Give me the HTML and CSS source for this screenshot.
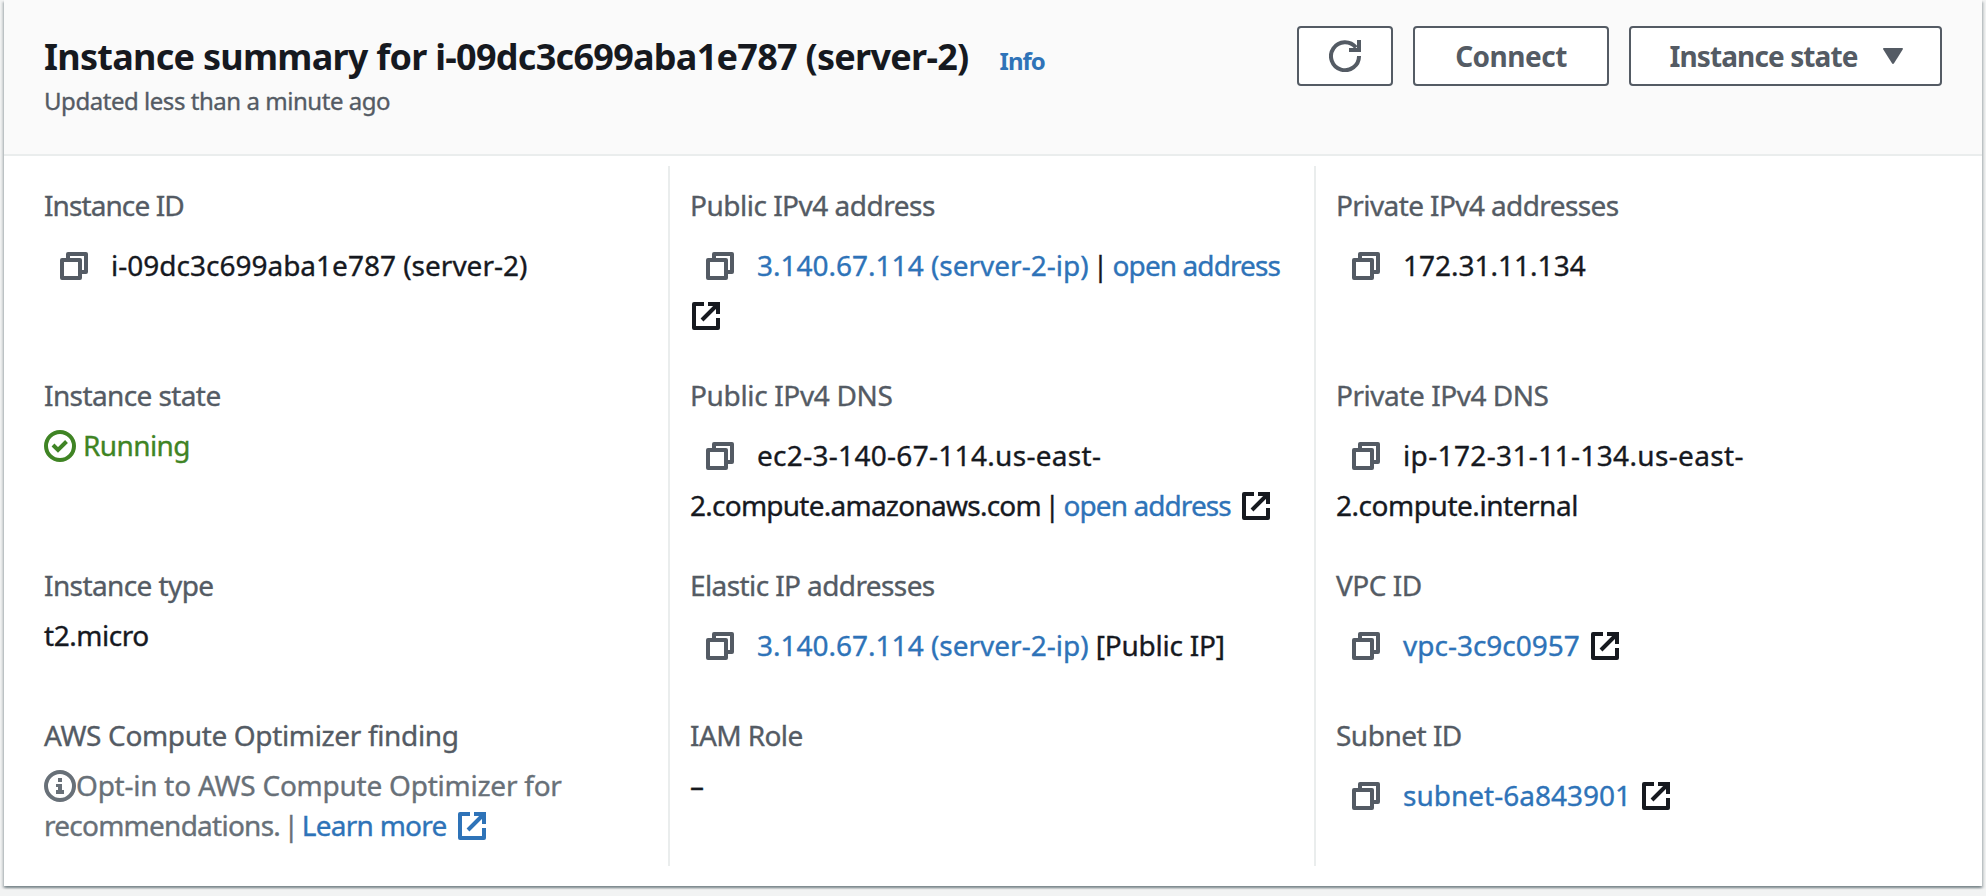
FILE: index.html
```html
<!DOCTYPE html>
<html lang="en">
<head>
<meta charset="utf-8">
<title>Instance summary</title>
<link rel="stylesheet" href="styles.css">
</head>
<body>
<svg class="sprite" aria-hidden="true">
  <symbol id="copy" viewBox="0 0 28 28"><g fill="none" stroke="currentColor" stroke-width="4" stroke-linejoin="round"><path d="M2 8h18v18H2z"/><path d="M8 8V2h18v18h-6"/></g></symbol>
  <symbol id="external" viewBox="0 0 28 28"><g fill="none" stroke="currentColor" stroke-width="4"><path stroke-linejoin="round" d="M12 2H2v24h24V16"/><path d="M16 2h10v10M26 2 10 18"/></g></symbol>
  <symbol id="check" viewBox="0 0 32 32"><g fill="none" stroke="currentColor" stroke-width="4"><circle cx="16" cy="16" r="14"/><path d="m9 15 5 5 8.500-8.500"/></g></symbol>
  <symbol id="info" viewBox="0 0 32 32"><circle cx="16" cy="16" r="14" fill="none" stroke="currentColor" stroke-width="4"/><path fill="currentColor" d="M14 8h4v4h-4zM12 14h6v6h2v4h-8v-4h2v-3h-2z"/></symbol>
  <symbol id="refresh" viewBox="0 0 32 32"><path fill="none" stroke="currentColor" stroke-width="4" d="M30 16A14 14 0 1 1 27 7.500"/><path fill="currentColor" d="M28 0h4v12H20V8h8z"/></symbol>
</svg>

<main class="card">
  <header class="card-header">
    <div class="heading">
      <div class="title-row"><h1 class="title">Instance summary for i-09dc3c699aba1e787 (server-2)</h1><a class="info">Info</a></div>
      <p class="updated">Updated less than a minute ago</p>
    </div>
    <div class="actions">
      <button class="btn btn-icon" aria-label="Refresh"><svg class="icon-lg"><use href="#refresh"/></svg></button>
      <button class="btn btn-connect">Connect</button>
      <button class="btn btn-state">Instance state<svg class="caret" viewBox="0 0 20 16"><path d="M1 0h18q1.500 0 .7 1.500L11.200 15q-1.200 1.800-2.400 0L.3 1.500Q-.5 0 1 0z"/></svg></button>
    </div>
  </header>

  <div class="columns">
    <section class="col">
      <div class="field"><div class="label ls-9">Instance ID</div>
        <div class="value copyable"><svg class="copy"><use href="#copy"/></svg>i-09dc3c699aba1e787 (server-2)</div></div>
      <div class="field"><div class="label ls-6">Instance state</div>
        <div class="value running"><svg class="icon-lg"><use href="#check"/></svg>Running</div></div>
      <div class="field"><div class="label ls-6">Instance type</div>
        <div class="value ls-4">t2.micro</div></div>
      <div class="field"><div class="label ls-3">AWS Compute Optimizer finding</div>
        <div class="value muted"><svg class="icon-lg"><use href="#info"/></svg><span class="ls-2">Opt-in to AWS Compute Optimizer for</span><br><span class="ls-7">recommendations. <span class="sep">|</span> <a class="link">Learn more</a></span><svg class="ext link"><use href="#external"/></svg></div></div>
    </section>

    <section class="col">
      <div class="field"><div class="label">Public IPv4 address</div>
        <div class="value copyable"><svg class="copy"><use href="#copy"/></svg><a class="link">3.140.67.114 (server-2-ip)</a> <span class="sep">|</span> <a class="link ls-9">open address</a><br><svg class="ext ext-start"><use href="#external"/></svg></div></div>
      <div class="field"><div class="label ls-3">Public IPv4 DNS</div>
        <div class="value copyable"><svg class="copy"><use href="#copy"/></svg><span class="wide">ec2-3-140-67-114.us-east-</span><br><span class="ls-7">2.compute.amazonaws.com <span class="sep">|</span></span> <a class="link ls-9">open address</a><svg class="ext"><use href="#external"/></svg></div></div>
      <div class="field"><div class="label ls-6">Elastic IP addresses</div>
        <div class="value copyable"><svg class="copy"><use href="#copy"/></svg><a class="link">3.140.67.114 (server-2-ip)</a> <span class="ls-2">[Public IP]</span></div></div>
      <div class="field"><div class="label ls-6">IAM Role</div>
        <div class="value">–</div></div>
    </section>

    <section class="col">
      <div class="field"><div class="label ls-6">Private IPv4 addresses</div>
        <div class="value copyable"><svg class="copy"><use href="#copy"/></svg>172.31.11.134</div></div>
      <div class="field"><div class="label ls-4">Private IPv4 DNS</div>
        <div class="value copyable"><svg class="copy"><use href="#copy"/></svg><span class="wider">ip-172-31-11-134.us-east-</span><br><span class="ls-4">2.compute.internal</span></div></div>
      <div class="field"><div class="label">VPC ID</div>
        <div class="value copyable"><svg class="copy"><use href="#copy"/></svg><a class="link">vpc-3c9c0957</a><svg class="ext"><use href="#external"/></svg></div></div>
      <div class="field"><div class="label">Subnet ID</div>
        <div class="value copyable"><svg class="copy"><use href="#copy"/></svg><a class="link">subnet-6a843901</a><svg class="ext"><use href="#external"/></svg></div></div>
    </section>
  </div>
</main>
</body>
</html>
```
FILE: styles.css
```css
* { box-sizing: border-box; }

body {
  margin: 0;
  height: 896px;
  overflow: hidden;
  background: #f2f3f3;
  color: #16191f;
  font: 28px/40px "Noto Sans", sans-serif;
}

.sprite { display: none; }

.card {
  height: 886px;
  margin: 0 4px;
  background: #fff;
  box-shadow: 0 2px 2px rgba(0, 28, 36, .3), 2px 2px 2px rgba(0, 28, 36, .15), -2px 2px 2px rgba(0, 28, 36, .15);
}

.card-header {
  display: flex;
  justify-content: space-between;
  align-items: flex-start;
  height: 156px;
  padding: 26px 40px 0;
  background: #fafafa;
  border-bottom: 2px solid #eaeded;
}

.heading { padding-top: 7px; }
.title-row { display: flex; align-items: baseline; gap: 31px; }
.title { margin: 0; font-size: 36px; line-height: 48px; font-weight: 700; letter-spacing: -.73px; }
.info { font-size: 24px; line-height: 32px; font-weight: 700; letter-spacing: -1px; color: #2e73b8; }
.updated { margin: 4px 0 0; font-size: 24px; line-height: 32px; letter-spacing: -.46px; color: #545b64; }

.actions { display: flex; gap: 20px; }
.btn {
  display: flex;
  align-items: center;
  justify-content: center;
  height: 60px;
  padding: 0;
  border: 2px solid #545b64;
  border-radius: 4px;
  background: #fff;
  color: #545b64;
  font: 700 28px/40px "Noto Sans", sans-serif;
}
.btn-icon { width: 96px; }
.btn-connect { width: 196px; letter-spacing: -.5px; }
.btn-state { width: 313px; padding-left: 2px; letter-spacing: -.9px; gap: 26px; }
.caret { width: 20px; height: 16px; fill: currentColor; }

.columns {
  display: grid;
  grid-template-columns: 664px 646px 1fr;
  height: 700px;
  margin-top: 10px;
}
.col {
  display: grid;
  grid-template-rows: 190px 190px 150px 1fr;
  padding: 19px 0 0 20px;
  border-left: 2px solid #eaeded;
}
.col:first-child { padding-left: 40px; border-left: 0; }

/* Slight stroke gives regular text a sturdier weight */
.label, .value, .updated { -webkit-text-stroke: .35px currentColor; }

.label { color: #545b64; letter-spacing: -.5px; }
.value { margin-top: 10px; white-space: nowrap; }
.copyable { margin-top: 15px; line-height: 50px; }
.running { color: #3f8424; letter-spacing: -.6px; }
.running .icon-lg { margin-right: 7px; }
.muted { color: #687078; }
.link { color: #2e73b8; }
.sep { margin: 0 -3px; }

.ls-2 { letter-spacing: -.24px; }
.ls-3 { letter-spacing: -.35px; }
.ls-4 { letter-spacing: -.46px; }
.ls-6 { letter-spacing: -.6px; }
.ls-7 { letter-spacing: -.75px; }
.ls-9 { letter-spacing: -.91px; }
.wide { letter-spacing: .3px; }
.wider { letter-spacing: .36px; }

.icon-lg { width: 32px; height: 32px; vertical-align: -6px; }
.copy { width: 28px; height: 28px; margin: 0 23px 0 16px; vertical-align: -4px; color: #545b64; }
.ext { width: 28px; height: 28px; margin-left: 11px; vertical-align: -4px; }
.ext-start { margin-left: 2px; }
```
